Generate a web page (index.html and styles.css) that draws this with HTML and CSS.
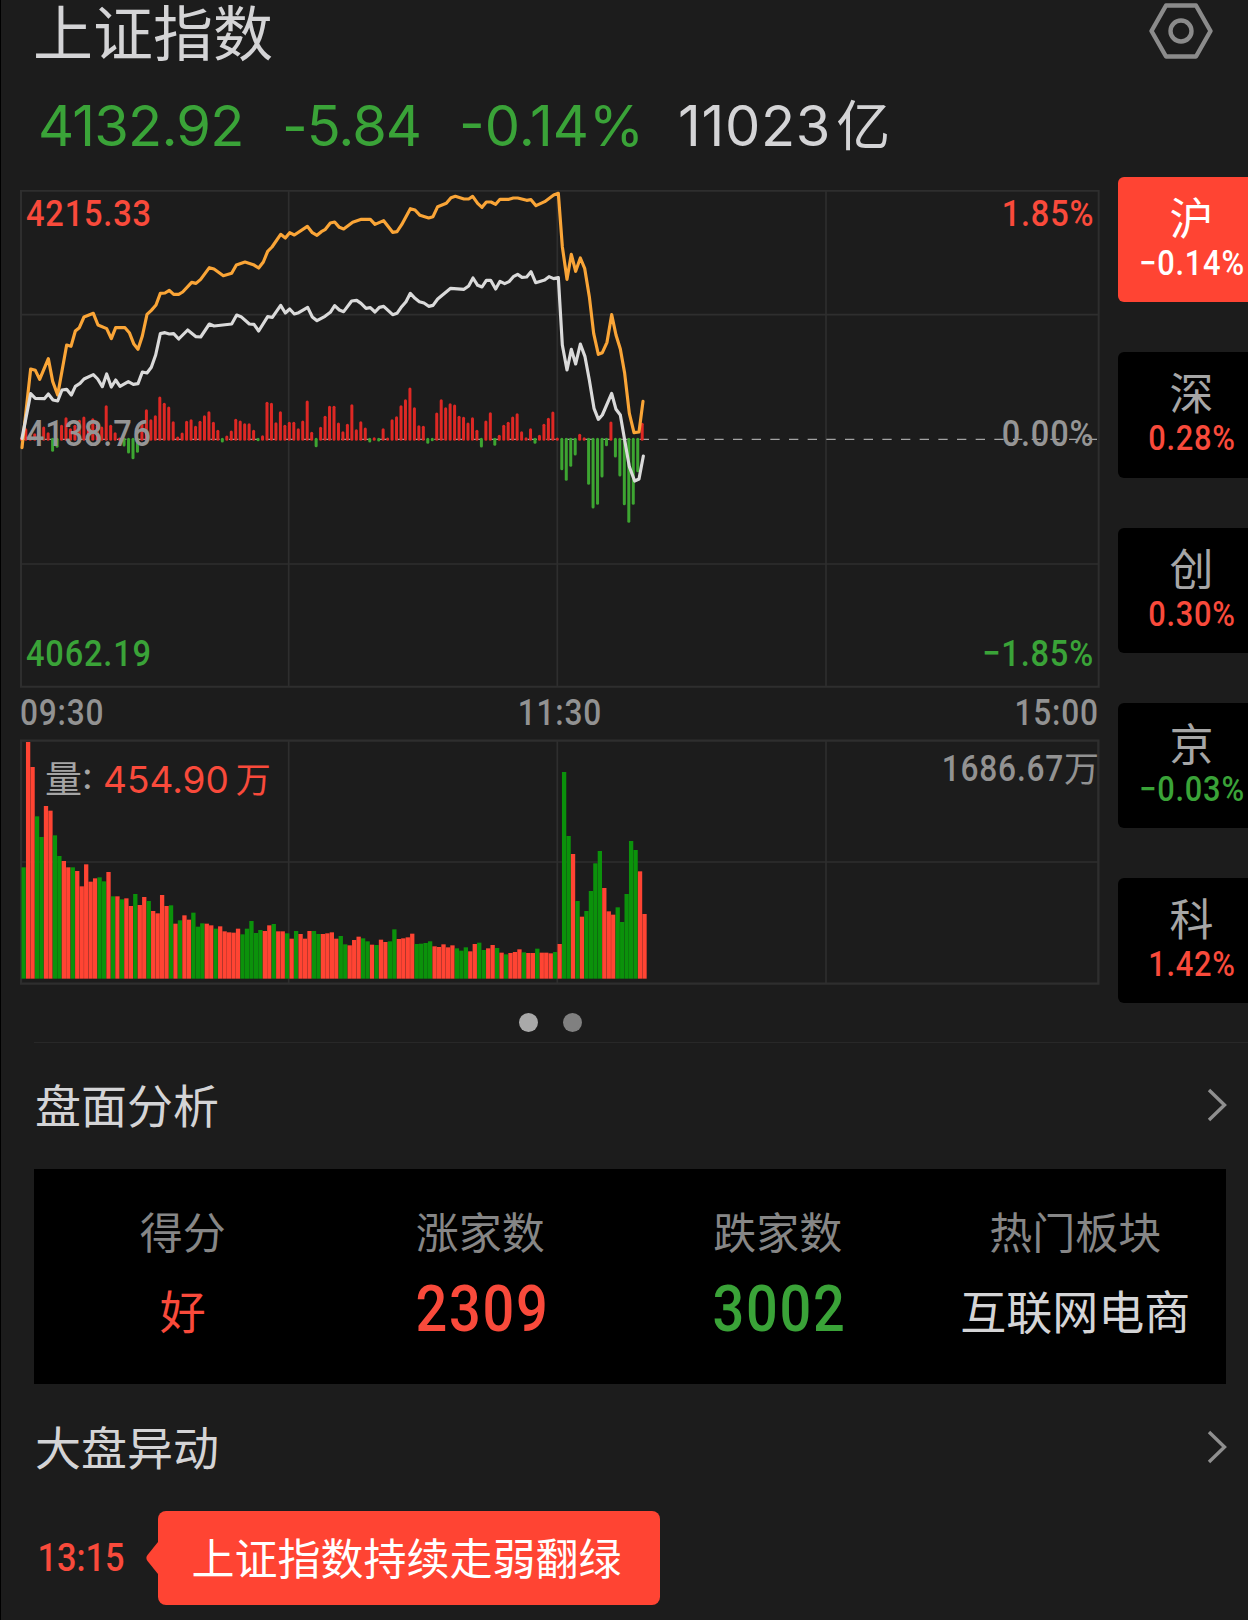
FILE: index.html
```html
<!DOCTYPE html>
<html lang="zh-CN">
<head>
    <meta charset="UTF-8">
    <meta name="viewport" content="width=device-width, initial-scale=1.0">
    <title>上证指数</title>
    <link rel="stylesheet" href="styles.css">
</head>
<body>
    <div id="wrap">
        <header class="top">
            <h1>上证指数</h1>
            <svg class="setting" viewBox="0 0 64 56">
                <path d="M17 2.5H47L61.5 28L47 53.5H17L2.5 28Z"/>
                <circle cx="32" cy="28" r="10.5"/>
            </svg>
        </header>
        <div class="quote">
            <span class="green q1">4132.92</span>
            <span class="green q2">-5.84</span>
            <span class="green q3">-0.14%</span>
            <span class="q4">11023<i>亿</i></span>
        </div>

        <div class="market">
            <div class="charts">
                <div class="price">
                    <svg id="priceSvg" viewBox="30 30 3240 1500">
                        <g class="grid">
                            <path d="M33 404H3264M33 1152H3264M836 32V1518M1642 32V1518M2448 32V1518"/>
                            <path class="frame" d="M33 32H3266V1520H33Z"/>
                        </g>
                        <path class="zero" d="M41 778H3266"/>
                        <g id="bars"></g>
                        <polyline class="avg" points="36,803 62,567 76,571 89,598 115,536 128,604 143,645 170,495 183,499 196,453 208,443 222,411 250,400 264,435 290,446 304,476 317,443 345,443 358,458 371,491 384,508 397,468 411,403 424,391 438,375 451,340 465,339 478,331 491,343 506,343 518,336 545,307 558,310 572,298 598,263 612,267 640,287 665,280 679,255 705,246 730,254 746,264 760,246 773,214 786,201 812,163 826,174 839,158 853,165 892,139 907,158 921,166 934,155 945,149 961,129 974,126 988,142 1001,147 1028,127 1054,118 1081,118 1095,133 1121,122 1148,157 1161,155 1175,134 1201,86 1215,90 1230,106 1256,114 1269,110 1283,80 1309,70 1323,53 1336,49 1362,57 1376,57 1388,49 1403,70 1416,82 1429,66 1443,66 1457,73 1470,58 1497,58 1510,54 1523,54 1550,61 1563,59 1578,77 1604,65 1631,45 1645,40 1657,200 1671,298 1684,223 1697,274 1711,234 1724,265 1738,350 1751,460 1765,523 1777,518 1791,487 1805,404 1818,465 1831,507 1844,580 1858,700 1872,758 1887,756 1899,664"/>
                        <polyline class="now" points="36,775 62,641 76,655 103,656 115,642 129,660 143,663 156,630 170,628 184,645 196,619 210,610 222,597 250,584 263,597 277,620 290,582 304,621 317,600 330,619 355,605 370,613 384,611 397,576 411,579 424,562 437,525 451,461 465,458 478,462 491,461 506,477 533,450 558,470 572,471 598,432 612,438 665,432 680,405 693,410 718,432 732,433 746,453 773,410 787,412 812,376 826,399 839,387 853,402 866,398 893,382 907,411 921,422 945,409 961,397 974,377 988,390 1001,395 1025,363 1040,361 1053,370 1068,385 1081,383 1095,396 1108,382 1121,379 1148,404 1161,400 1175,380 1188,365 1201,340 1215,355 1228,365 1242,369 1256,379 1269,376 1283,357 1322,325 1362,328 1376,318 1389,294 1403,316 1416,321 1429,301 1442,301 1457,327 1470,304 1484,311 1497,305 1510,290 1523,283 1536,292 1550,291 1563,275 1577,308 1604,300 1617,290 1631,296 1645,293 1657,495 1671,570 1684,508 1697,552 1711,492 1725,530 1738,600 1752,685 1765,718 1777,705 1805,640 1818,688 1831,705 1844,780 1858,860 1874,903 1887,897 1900,828"/>
                    </svg>
                    <div class="labels">
                        <div class="row"><span class="din red">4215.33</span><span class="din red">1.85%</span></div>
                        <div class="row gray"><span class="din">4138.76</span><span class="din">0.00%</span></div>
                        <div class="row"><span class="din green">4062.19</span><span class="din green">−1.85%</span></div>
                    </div>
                </div>
                <div class="times"><span class="din">09:30</span><span class="din">11:30</span><span class="din">15:00</span></div>
                <div class="volume">
                    <svg id="volSvg" viewBox="30 57 3240 738">
                        <g class="grid">
                            <path d="M33 426H3264M836 62V790M1642 62V790M2448 62V790"/>
                            <path class="frame thick" d="M33 62H3265V791H33Z"/>
                        </g>
                        <g id="vols"></g>
                    </svg>
                    <div class="vlabels">
                        <div class="vnow">量: <span class="red">454.90<i>万</i></span></div>
                        <div class="vmax"><span class="din">1686.67</span><i>万</i></div>
                    </div>
                </div>
                <div class="dots"><span class="on"></span><span></span></div>
            </div>
            <div class="tabs">
                <div class="tab on"><b>沪</b><span class="din">−0.14%</span></div>
                <div class="tab"><b>深</b><span class="din red">0.28%</span></div>
                <div class="tab"><b>创</b><span class="din red">0.30%</span></div>
                <div class="tab"><b>京</b><span class="din green">−0.03%</span></div>
                <div class="tab"><b>科</b><span class="din red">1.42%</span></div>
            </div>
        </div>

        <section class="analysis">
            <div class="title">
                <h2>盘面分析</h2>
                <svg class="arrow" viewBox="0 0 20 34"><path d="M2 2L17.5 17L2 32"/></svg>
            </div>
            <div class="panel">
                <div class="cell"><p>得分</p><strong class="red">好</strong></div>
                <div class="cell"><p>涨家数</p><strong class="num din red">2309</strong></div>
                <div class="cell"><p>跌家数</p><strong class="num din green">3002</strong></div>
                <div class="cell"><p>热门板块</p><strong>互联网电商</strong></div>
            </div>
        </section>

        <section class="move">
            <div class="title">
                <h2>大盘异动</h2>
                <svg class="arrow" viewBox="0 0 20 34"><path d="M2 2L17.5 17L2 32"/></svg>
            </div>
            <div class="event">
                <span class="time din red">13:15</span>
                <svg class="tip" viewBox="0 0 12 32"><path d="M12 0V32L1.5 19Q-.8 16 1.5 13Z"/></svg>
                <div class="bubble">上证指数持续走弱翻绿</div>
            </div>
        </section>
    </div>
    <script src="script.js"></script>
</body>
</html>
```
FILE: styles.css
```css
* {
    margin: 0;
    padding: 0;
    box-sizing: border-box;
}
body {
    width: 100%;
    height: 1620px;
    background: #1c1c1c;
    color: #d4d4d6;
    font-family: Inter, "Noto Sans CJK SC", sans-serif;
    overflow: hidden;
}
i, b, h1, h2, strong {
    font-style: normal;
    font-weight: 400;
}
svg {
    display: block;
    fill: none;
}

#wrap {
    width: 1248px;
    height: 1620px;
    border-left: 1px solid #000;
    overflow: hidden;
}

.red {
    color: #f94a3b;
}
.green {
    color: #3aa338;
}
.gray {
    color: #959595;
}
/* narrow digits */
.din {
    font-family: Roboto, "Noto Sans CJK SC", sans-serif;
    font-weight: 500;
    letter-spacing: 0.025em;
    transform: scaleX(0.88);
}

/* header */
.top {
    height: 66px;
    padding: 0 35px 0 32px;
    display: flex;
    justify-content: space-between;
}
.top h1 {
    font-size: 60px;
    line-height: 69px;
}
.setting {
    width: 64px;
    height: 56px;
    margin-top: 3px;
    stroke: #8b8b8b;
    stroke-width: 4.4;
    stroke-linejoin: round;
}
.quote {
    height: 111px;
    padding-left: 37px;
    display: flex;
    font-size: 56px;
    line-height: 120px;
    white-space: nowrap;
}
.q1 {
    width: 244px;
    letter-spacing: -0.8px;
}
.q2 {
    width: 177px;
    letter-spacing: -1px;
}
.q3 {
    width: 219px;
}
.q4 {
    letter-spacing: 0.7px;
}
.q4 i {
    margin-left: 5px;
    font-size: 54px;
}

/* charts */
.market {
    height: 865px;
    padding-left: 19px;
    display: flex;
    gap: 18px;
}
.charts {
    width: 1080px;
    padding-top: 13px;
    flex: none;
}
.price, .volume {
    position: relative;
}
.price {
    height: 500px;
}
.volume {
    height: 246px;
}
.price svg, .volume svg {
    width: 100%;
    height: 100%;
}
.grid path {
    stroke: #2e2e2e;
    stroke-width: 5;
}
.grid .frame {
    stroke-width: 6;
}
.grid .thick {
    stroke-width: 7;
}
.zero {
    stroke: #a3a3a3;
    stroke-width: 4;
    stroke-dasharray: 28 28;
}
.avg, .now {
    stroke: #faa537;
    stroke-width: 9.5;
    stroke-linejoin: round;
    stroke-linecap: round;
}
.now {
    stroke: #dadada;
}
#bars line {
    stroke-width: 9;
    stroke-linecap: round;
}
#bars .up {
    stroke: #de2824;
}
#bars .down {
    stroke: #3da531;
}
#vols .up {
    fill: #ff4433;
}
#vols .down {
    fill: #0b920b;
}
.labels {
    position: absolute;
    left: 6px;
    right: 6px;
    top: 0;
    height: 100%;
    padding: 4px 0 16px;
    display: flex;
    flex-direction: column;
    justify-content: space-between;
    font-size: 37px;
    line-height: 40px;
}
.labels .row, .times {
    display: flex;
    justify-content: space-between;
}
.row .din:first-child, .times .din:first-child {
    transform-origin: left;
}
.row .din:last-child, .times .din:last-child {
    transform-origin: right;
}
.times {
    height: 49px;
    padding-right: 1px;
    font-size: 36px;
    line-height: 46px;
    color: #929292;
}
.vlabels {
    position: absolute;
    left: 25px;
    right: 1px;
    top: 0;
    display: flex;
    justify-content: space-between;
    color: #a5a5a5;
}
.vnow {
    font-size: 37px;
    line-height: 82px;
}
.vnow i {
    margin-left: 7px;
    font-size: 35px;
}
.vmax {
    display: flex;
    font-size: 35px;
    line-height: 60px;
    color: #929292;
}
.vmax .din {
    font-size: 36px;
    transform-origin: right;
}
.dots {
    padding-top: 28px;
    display: flex;
    justify-content: center;
    gap: 25px;
    margin-right: 19px;
}
.dots span {
    width: 19px;
    height: 19px;
    border-radius: 50%;
    background: #808080;
}
.dots .on {
    background: #a9a9a9;
}

/* index tabs */
.tabs {
    flex: none;
    width: 148px;
    display: flex;
    flex-direction: column;
    gap: 50px;
}
.tab {
    height: 125.3px;
    padding-top: 18px;
    border-radius: 6px;
    background: #000;
    text-align: center;
}
.tab b {
    display: block;
    margin-right: 1px;
    font-size: 44px;
    line-height: 48px;
    color: #a6a6a6;
}
.tab span {
    display: block;
    font-size: 35px;
    line-height: 42px;
}
.tab.on {
    background: #ff4433;
    color: #fff;
}
.tab.on b {
    color: #fff;
}

/* sections */
.analysis {
    margin-left: 33px;
    border-top: 1px solid #282828;
}
.title {
    height: 126px;
    padding-right: 21px;
    display: flex;
    justify-content: space-between;
    align-items: center;
}
.title h2 {
    padding-left: 1px;
    font-size: 46px;
    line-height: 60px;
}
.arrow {
    width: 20px;
    height: 34px;
    margin-bottom: 3px;
    stroke: #8f8f8f;
    stroke-width: 3.4;
}
.panel {
    width: 1192px;
    height: 215px;
    padding: 38px 2px 0 0;
    background: #000;
    display: grid;
    grid-template-columns: repeat(4, 1fr);
    text-align: center;
}
.cell p {
    font-size: 43px;
    line-height: 52px;
    color: #868686;
}
.cell strong {
    display: block;
    font-size: 46px;
    line-height: 107px;
}
.cell .num {
    padding-left: 4px;
    font-size: 65px;
    line-height: 101px;
    letter-spacing: 0.03em;
    font-weight: 500;
    transform: scaleX(0.86);
}
.move {
    margin-left: 33px;
}
.move .title {
    height: 127px;
    padding-top: 1px;
}
.event {
    height: 94px;
    display: flex;
    align-items: center;
}
.time {
    width: 112px;
    padding-left: 4px;
    font-size: 39px;
    letter-spacing: 0;
    transform-origin: left;
}
.tip {
    width: 12px;
    height: 32px;
    fill: #ff4433;
}
.bubble {
    width: 502px;
    height: 94px;
    padding-right: 5px;
    border-radius: 8px;
    background: #ff4433;
    color: #fff;
    font-size: 43px;
    line-height: 97px;
    text-align: center;
}
```
FILE: script.js
```js
const NS = "http://www.w3.org/2000/svg";
const STEP = 13.4; // one minute

// end of each minute bar in the price chart, base line is 778
const ticks = [
    775, 745, 760, 760, 738, 740, 757, 815, 803, 735, 712, 745, 735, 720, 710, 735, 715, 735, 740, 676,
    735, 757, 775, 799, 820, 837, 818, 722, 688, 718, 706, 650, 669, 680, 724, 770, 758, 723, 718, 738,
    723, 706, 694, 726, 750, 787, 767, 752, 717, 722, 730, 730, 750, 783, 766, 666, 669, 727, 694, 735,
    726, 726, 745, 722, 662, 756, 801, 741, 708, 678, 678, 728, 754, 732, 673, 748, 724, 743, 787, 772,
    784, 745, 774, 718, 709, 676, 658, 623, 682, 736, 738, 791, 783, 698, 658, 682, 670, 674, 708, 711,
    728, 712, 750, 802, 722, 697, 797, 765, 735, 726, 710, 700, 754, 772, 745, 791, 765, 732, 714, 695,
    774, 870, 902, 860, 826, 762, 772, 914, 985, 974, 892, 798, 725, 832, 889, 975, 1028, 974, 876, 729
];

// volume, negative = down minute
const vols = [
    -334, 710, 635, -487, -425, 518, 504, -430, -368, 353, 334, -334, 323, 277, 343, 291, 301, -304, -292, 320,
    -247, 247, -238, 241, 218, -254, 221, 245, -233, 203, 196, 251, 218, -220, 165, -175, 190, 177, -198, -156,
    -166, 165, 160, -150, 157, 142, 139, 138, 150, -133, -150, -173, -137, -146, 143, 160, -164, 142, 142, -136,
    120, -143, 134, 120, 143, -143, -134, 134, 136, 139, 120, -128, -103, 100, 116, 126, -121, -112, 102, -101,
    117, 110, -112, -148, 119, 121, 124, 135, -104, -105, -107, -112, 97, 95, 103, 94, 100, -91, -84, -94,
    82, 104, -108, -86, 91, 101, -92, 78, -73, 77, 80, 88, -79, 77, 77, -90, 78, 78, 76, -80,
    104, -620, -428, 374, -233, 186, -203, -263, -346, -383, 272, 202, 192, -214, -170, -254, -413, -386, 322, 194
];

function add(parent, tag, attrs) {
    const el = document.createElementNS(NS, tag);
    for (const key in attrs) {
        el.setAttribute(key, attrs[key]);
    }
    parent.append(el);
}

const barBox = document.querySelector("#bars");
ticks.forEach((end, i) => {
    const x = 34 + i * STEP;
    const up = end < 778;
    add(barBox, "line", {
        class: up ? "up" : "down",
        x1: x, x2: x, y1: 778,
        y2: up ? Math.min(end + 4, 777) : end - 4
    });
});

const volBox = document.querySelector("#vols");
vols.forEach((v, i) => {
    const h = Math.abs(v);
    add(volBox, "rect", {
        class: v > 0 ? "up" : "down",
        x: 34.5 + i * STEP, y: 776 - h, width: 12.9, height: h
    });
});
```
